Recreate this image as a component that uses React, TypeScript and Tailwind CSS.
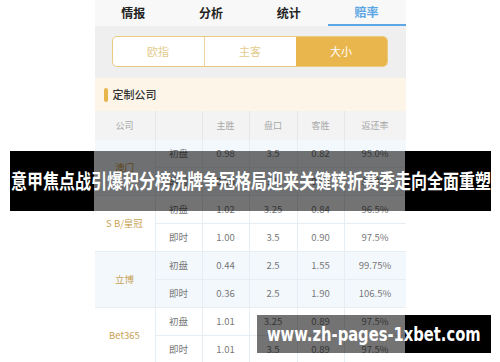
const tabs = ["情报", "分析", "统计", "赔率"];

type Row = { label: string; vals: string[] };
type Group = { name: string; color: string; tinted: boolean; rows: Row[] };

const groups: Group[] = [
  {
    name: "澳门",
    color: "text-[#d49a3e]",
    tinted: true,
    rows: [
      { label: "初盘", vals: ["0.98", "3.5", "0.82", "95.0%"] },
      { label: "即时", vals: ["0.96", "3.5", "0.84", "95.0%"] },
    ],
  },
  {
    name: "S B/皇冠",
    color: "text-[#c9a255]",
    tinted: false,
    rows: [
      { label: "初盘", vals: ["1.02", "3.25", "0.84", "96.5%"] },
      { label: "即时", vals: ["1.00", "3.5", "0.90", "97.5%"] },
    ],
  },
  {
    name: "立博",
    color: "text-[#c9a255]",
    tinted: true,
    rows: [
      { label: "初盘", vals: ["0.44", "2.5", "1.55", "99.75%"] },
      { label: "即时", vals: ["0.36", "2.5", "1.90", "106.5%"] },
    ],
  },
  {
    name: "Bet365",
    color: "text-[#c9a255]",
    tinted: false,
    rows: [
      { label: "初盘", vals: ["1.01", "3.25", "0.89", "97.5%"] },
      { label: "即时", vals: ["1.01", "3.5", "0.89", "97.5%"] },
    ],
  },
];

const cols = "grid grid-cols-[47px_47px_48px_47px_61px]";

export default function App() {
  return (
    <div
      className="relative w-[500px] h-[362px] overflow-hidden bg-white"
      style={{ fontFamily: '"Noto Sans CJK SC", "Noto Sans", sans-serif' }}
    >
      {/* phone screenshot */}
      <div className="mx-auto w-[311px] h-[362px] bg-white">
        {/* tabs */}
        <div className="flex h-[26px] bg-[#f8f8f8]">
          {tabs.map((t, i) => (
            <div
              key={t}
              className={
                i === 3
                  ? "flex-1 flex items-center justify-center text-[12px] font-bold text-[#5ba6e4] border-b-2 border-[#5ba6e4]"
                  : "flex-1 flex items-center justify-center text-[12px] font-bold text-[#222]"
              }
            >
              {t}
            </div>
          ))}
        </div>

        {/* segmented control */}
        <div className="h-[52px] bg-[#efefef] pl-[17px] pr-[18px] pt-[10px]">
          <div className="flex h-[31px] rounded-[5px] border border-[#e9cb80] overflow-hidden bg-white">
            <div className="flex-1 flex items-center justify-center text-[11px] text-[#e3cc8e] border-r border-[#ecd59a]">
              欧指
            </div>
            <div className="flex-1 flex items-center justify-center text-[11px] text-[#e3cc8e]">
              主客
            </div>
            <div className="flex-1 flex items-center justify-center text-[11px] text-white bg-[#e9b64e]">
              大小
            </div>
          </div>
        </div>

        {/* section title */}
        <div className="flex items-center h-[33px] bg-[#fdf6e8] pl-[9px]">
          <div className="w-[4px] h-[14px] rounded-full bg-[#e8b54a]" />
          <span className="ml-[5px] text-[11px] font-medium text-[#333]">定制公司</span>
        </div>

        {/* table header */}
        <div className="flex h-[29px] bg-[#f3f3f3] text-[9px] text-[#a8a8a8]">
          <div className="w-[61px] flex items-center justify-center border-r border-[#e6e6e6]">公司</div>
          <div className={cols + " flex-1"}>
            <div className="border-r border-[#e6e6e6]" />
            <div className="flex items-center justify-center border-r border-[#e6e6e6]">主胜</div>
            <div className="flex items-center justify-center border-r border-[#e6e6e6]">盘口</div>
            <div className="flex items-center justify-center border-r border-[#e6e6e6]">客胜</div>
            <div className="flex items-center justify-center">返还率</div>
          </div>
        </div>

        {/* table body */}
        {groups.map((g) => (
          <div
            key={g.name}
            className={
              g.tinted
                ? "flex border-b border-[#e6edf3] bg-[#f3f8fd]"
                : "flex border-b border-[#e6edf3] bg-white"
            }
          >
            <div
              className={
                "w-[61px] flex items-center justify-center text-[9.5px] border-r border-[#e6edf3] " + g.color
              }
            >
              {g.name}
            </div>
            <div className="flex-1">
              {g.rows.map((r, ri) => (
                <div
                  key={r.label}
                  className={
                    cols +
                    " h-[27.5px] text-[9.5px] text-[#777] " +
                    (ri === 0 ? "border-b border-[#e6edf3]" : "")
                  }
                >
                  <div className="flex items-center justify-center border-r border-[#e6edf3]">{r.label}</div>
                  {r.vals.map((v, vi) => (
                    <div
                      key={vi}
                      className={
                        vi < 3
                          ? "flex items-center justify-center border-r border-[#e6edf3]"
                          : "flex items-center justify-center"
                      }
                    >
                      {v}
                    </div>
                  ))}
                </div>
              ))}
            </div>
          </div>
        ))}
      </div>

      {/* title banner overlay */}
      <div className="absolute top-[151px] left-[10px] flex w-[481px] h-[60px]">
        <div className="w-[84px] bg-black" />
        <div className="w-[311px] bg-black/55" />
        <div className="flex-1 bg-black" />
        <div className="absolute inset-0 flex items-center justify-center">
          <span className="inline-block whitespace-nowrap text-[20px] font-bold text-white scale-x-[0.8]">
            意甲焦点战引爆积分榜洗牌争冠格局迎来关键转折赛季走向全面重塑
          </span>
        </div>
      </div>

      {/* watermark overlay */}
      <div className="absolute top-[315px] left-[257px] flex w-[234px] h-[38px]">
        <div className="w-[148px] bg-black/55" />
        <div className="flex-1 bg-black" />
        <div className="absolute inset-0 flex items-center pl-[10px]">
          <span
            className="inline-block whitespace-nowrap text-[19px] font-bold text-white origin-left scale-x-[0.775]"
            style={{ fontFamily: '"DejaVu Sans", sans-serif' }}
          >
            www.zh-pages-1xbet.com
          </span>
        </div>
      </div>
    </div>
  );
}
